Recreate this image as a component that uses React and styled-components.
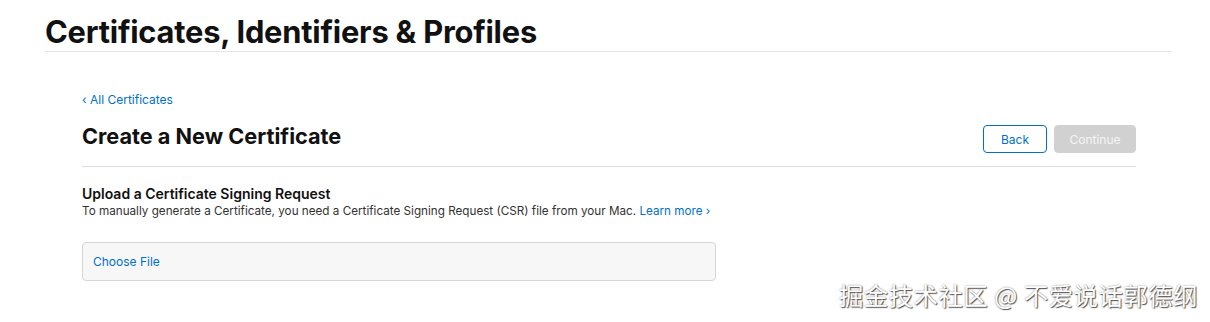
import React from "react";
import styled, { createGlobalStyle } from "styled-components";

const GlobalStyle = createGlobalStyle`
  html, body {
    margin: 0;
    padding: 0;
    background: #fff;
  }
  body {
    font-family: Inter, "Helvetica Neue", "Liberation Sans", sans-serif;
    color: #111;
    -webkit-font-smoothing: antialiased;
  }
`;

const Page = styled.div`
  position: relative;
  width: 1210px;
  height: 322px;
  overflow: hidden;
  padding: 0 38px 0 45px;
  box-sizing: border-box;
`;

const PageHeader = styled.header`
  padding-top: 16px;
  border-bottom: 1px solid #e6e6e6;
  padding-bottom: 3px;
`;

const Title = styled.h1`
  margin: 0;
  font-size: 30.8px;
  font-weight: 700;
  letter-spacing: -0.2px;
  line-height: 32px;
  color: #111;
`;

const Content = styled.main`
  margin: 0 36px 0 37px;
  padding-top: 36px;
`;

const Link = styled.a`
  color: #0070c9;
  font-size: 12px;
  text-decoration: none;
  cursor: pointer;
`;

const TitleRow = styled.div`
  display: flex;
  align-items: flex-end;
  justify-content: space-between;
  padding: 14px 0 13px;
  border-bottom: 1px solid #dcdcdc;
`;

const SubTitle = styled.h2`
  margin: 0 0 3px;
  font-size: 21.7px;
  font-weight: 700;
  line-height: 28px;
  color: #111;
`;

const Actions = styled.div`
  display: flex;
  gap: 7px;
`;

const Button = styled.button`
  height: 28px;
  min-width: ${(p) => p.$w}px;
  padding: 0 14px;
  border-radius: 4px;
  font-family: inherit;
  font-size: 12px;
  border: 1px solid ${(p) => (p.$disabled ? "#d1d1d1" : "#0070c9")};
  background: ${(p) => (p.$disabled ? "#d1d1d1" : "#fff")};
  color: ${(p) => (p.$disabled ? "#f4f4f4" : "#0070c9")};
  box-sizing: border-box;
`;

const Section = styled.section`
  padding-top: 18px;
`;

const SectionTitle = styled.h3`
  margin: 0;
  font-size: 14px;
  font-weight: 600;
  line-height: 17px;
  color: #111;
`;

const Desc = styled.p`
  margin: 0;
  font-size: 11.7px;
  line-height: 18px;
  color: #333;

  ${Link} {
    font-size: 11.7px;
  }
`;

const FileBox = styled.div`
  width: 634px;
  height: 39px;
  margin-top: 22px;
  box-sizing: border-box;
  border: 1px solid #d6d6d6;
  border-radius: 4px;
  background: #f7f7f7;
  display: flex;
  align-items: center;
  padding-left: 10px;
`;

const Watermark = styled.div`
  position: absolute;
  right: 12px;
  bottom: 10px;
  font-family: "Noto Sans CJK SC", sans-serif;
  font-size: 24.4px;
  color: #fff;
  letter-spacing: 0.5px;
  text-shadow: 1px 1px 1px #555, 0 0 2px #888;
`;

export default function App() {
  return (
    <>
      <GlobalStyle />
      <Page>
        <PageHeader>
          <Title>Certificates, Identifiers &amp; Profiles</Title>
        </PageHeader>
        <Content>
          <Link>‹ All Certificates</Link>
          <TitleRow>
            <SubTitle>Create a New Certificate</SubTitle>
            <Actions>
              <Button $w={64}>Back</Button>
              <Button $w={82} $disabled>
                Continue
              </Button>
            </Actions>
          </TitleRow>
          <Section>
            <SectionTitle>Upload a Certificate Signing Request</SectionTitle>
            <Desc>
              To manually generate a Certificate, you need a Certificate Signing
              Request (CSR) file from your Mac. <Link>Learn more ›</Link>
            </Desc>
            <FileBox>
              <Link>Choose File</Link>
            </FileBox>
          </Section>
        </Content>
        <Watermark>掘金技术社区 @ 不爱说话郭德纲</Watermark>
      </Page>
    </>
  );
}
